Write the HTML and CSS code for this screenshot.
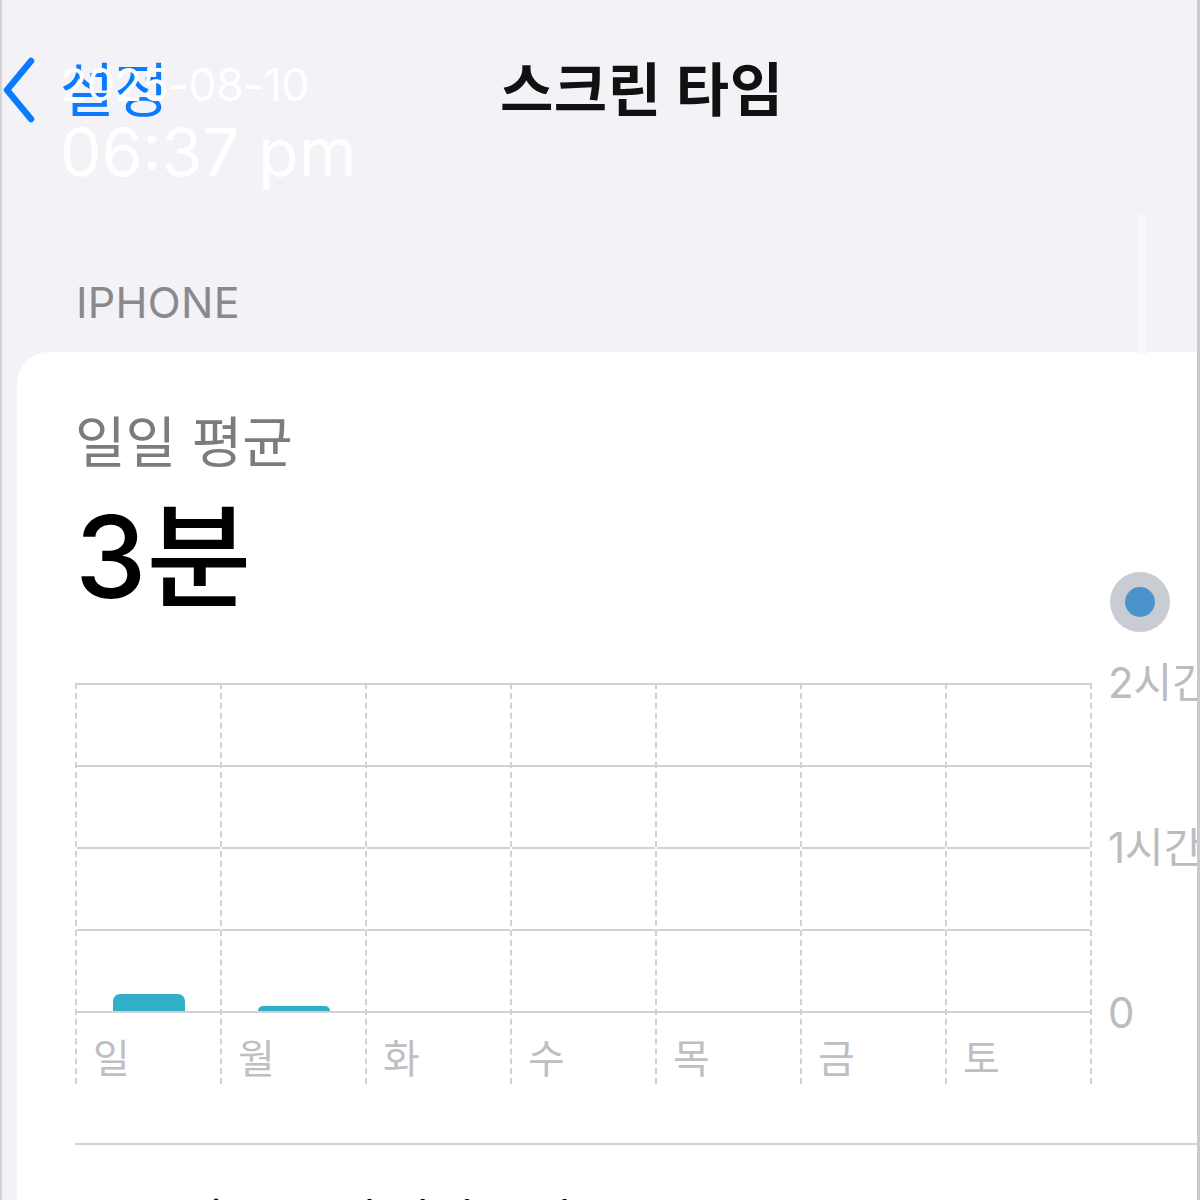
FILE: index.html
```html
<!DOCTYPE html>
<html lang="ko">
<head>
  <meta charset="UTF-8" />
  <meta name="viewport" content="width=device-width, initial-scale=1.0">
  <title>스크린 타임</title>
  <link rel="stylesheet" href="styles.css">
</head>
<body>
  <div class="screen">
    <!-- 상단 내비게이션 -->
    <div class="nav">
      <a class="back" href="#">
        <svg class="chevron" width="34" height="68" viewBox="0 0 34 68">
          <path d="M29 4 L5 33 L29 62" fill="none" stroke="#0a7aff" stroke-width="6.5" stroke-linecap="round" stroke-linejoin="round"/>
        </svg>
        <span>설정</span>
      </a>
      <h1 class="title">스크린 타임</h1>
    </div>

    <!-- 사진 날짜 스탬프 -->
    <div class="stamp">
      <div class="stamp-date">2025-08-10</div>
      <div class="stamp-time">06:37 pm</div>
    </div>

    <div class="scroll-indicator"></div>

    <div class="section-label">IPHONE</div>

    <div class="card">
      <div class="summary">
        <div>
          <div class="summary-label">일일 평균</div>
          <div class="summary-value">3분</div>
        </div>
        <div class="dot"><span></span></div>
      </div>

      <div class="chart">
        <div class="days" id="days"></div>
        <div class="axis">
          <span>2시간</span>
          <span>1시간</span>
          <span>0</span>
        </div>
      </div>

      <div class="divider"></div>
      <div class="next-row">총 스크린 타임 보기</div>
    </div>
  </div>

  <script>
    const days = [
      { name: '일', minutes: 6.3 },
      { name: '월', minutes: 1.9 },
      { name: '화', minutes: 0 },
      { name: '수', minutes: 0 },
      { name: '목', minutes: 0 },
      { name: '금', minutes: 0 },
      { name: '토', minutes: 0 }
    ];
    const MAX_MINUTES = 120;
    const PLOT_HEIGHT = 328;

    const wrap = document.getElementById('days');
    days.forEach(d => {
      const col = document.createElement('div');
      col.className = 'day';
      const plot = document.createElement('div');
      plot.className = 'plot';
      if (d.minutes > 0) {
        const bar = document.createElement('div');
        bar.className = 'bar';
        bar.style.height = Math.round(d.minutes / MAX_MINUTES * PLOT_HEIGHT) + 'px';
        plot.appendChild(bar);
      }
      const label = document.createElement('div');
      label.className = 'day-label';
      label.textContent = d.name;
      col.appendChild(plot);
      col.appendChild(label);
      wrap.appendChild(col);
    });
  </script>
</body>
</html>
```

FILE: styles.css
```css
html, body {
  margin: 0;
  height: 100%;
  overflow: hidden;
}
body {
  font-family: 'Inter', 'Noto Sans CJK KR', sans-serif;
  background: #f2f2f7;
  color: #000;
}
.screen {
  position: relative;
  height: 1200px;
  border-left: 2px solid #d3d3d8;
  border-right: 3px solid #cacace;
  box-sizing: border-box;
  overflow: hidden;
}
.nav {
  display: flex;
  align-items: center;
  height: 70px;
  margin-top: 56px;
}
.back {
  display: flex;
  align-items: center;
  gap: 24px;
  color: #0a7aff;
  text-decoration: none;
  font-size: 59px;
  line-height: 1;
  width: 498px;
}
.back span {
  margin-top: -2px;
}
.title {
  margin: 0;
  font-size: 58px;
  font-weight: 700;
  line-height: 1;
  margin-top: -2px;
  letter-spacing: 0.5px;
  color: #111;
}
.stamp {
  position: absolute;
  left: 58px;
  top: 62px;
  color: #fff;
  line-height: 1;
}
.stamp-date {
  font-size: 45px;
  letter-spacing: -0.6px;
}
.stamp-time {
  font-size: 66px;
  margin-top: 12px;
}
.scroll-indicator {
  position: absolute;
  left: 1136px;
  top: 214px;
  width: 9px;
  height: 140px;
  background: #f8f8fb;
  border-radius: 4px 4px 0 0;
}
.section-label {
  margin: 155px 0 0 74px;
  font-size: 43px;
  line-height: 43px;
  color: #8a8a8e;
  letter-spacing: 0.3px;
}
.card {
  margin-top: 28px;
  margin-left: 15px;
  width: 1260px;
  background: #fff;
  border-radius: 32px 0 0 32px;
  padding: 58px 0 0 58px;
  height: 900px;
}
.summary {
  display: flex;
  justify-content: space-between;
  align-items: flex-end;
  width: 1095px;
}
.summary-label {
  font-size: 55px;
  line-height: 64px;
  color: #7c7c80;
}
.summary-value {
  font-size: 114px;
  line-height: 126px;
  margin-top: 20px;
  font-weight: 500;
}
.dot {
  width: 60px;
  height: 60px;
  border-radius: 50%;
  background: #c9cdd3;
  display: flex;
  align-items: center;
  justify-content: center;
  margin-bottom: -12px;
}
.dot span {
  width: 30px;
  height: 30px;
  border-radius: 50%;
  background: #4a93cb;
}
.chart {
  display: flex;
  margin-top: 63px;
}
.days {
  display: flex;
  border-right: 2px dashed #d2d2d6;
}
.day {
  width: 143px;
  border-left: 2px dashed #d2d2d6;
}
.plot {
  height: 330px;
  background: repeating-linear-gradient(to bottom, #d1d1d6 0 2px, transparent 2px 82px);
  display: flex;
  align-items: flex-end;
  justify-content: center;
  padding-bottom: 2px;
  box-sizing: border-box;
}
.bar {
  width: 72px;
  background: #30afc7;
  border-radius: 7px 7px 0 0;
}
.day-label {
  height: 71px;
  padding: 26px 0 0 16px;
  box-sizing: border-box;
  font-size: 40px;
  line-height: 40px;
  color: #bfbfc3;
}
.axis {
  display: flex;
  flex-direction: column;
  justify-content: space-between;
  height: 366px;
  margin-top: -18px;
  padding-left: 16px;
  font-size: 42px;
  line-height: 36px;
  color: #bcbcc0;
  white-space: nowrap;
}
.divider {
  margin-top: 59px;
  height: 2px;
  background: #d1d1d6;
}
.next-row {
  margin-top: 50px;
  font-size: 46px;
  line-height: 50px;
  padding-left: 120px;
}
```
